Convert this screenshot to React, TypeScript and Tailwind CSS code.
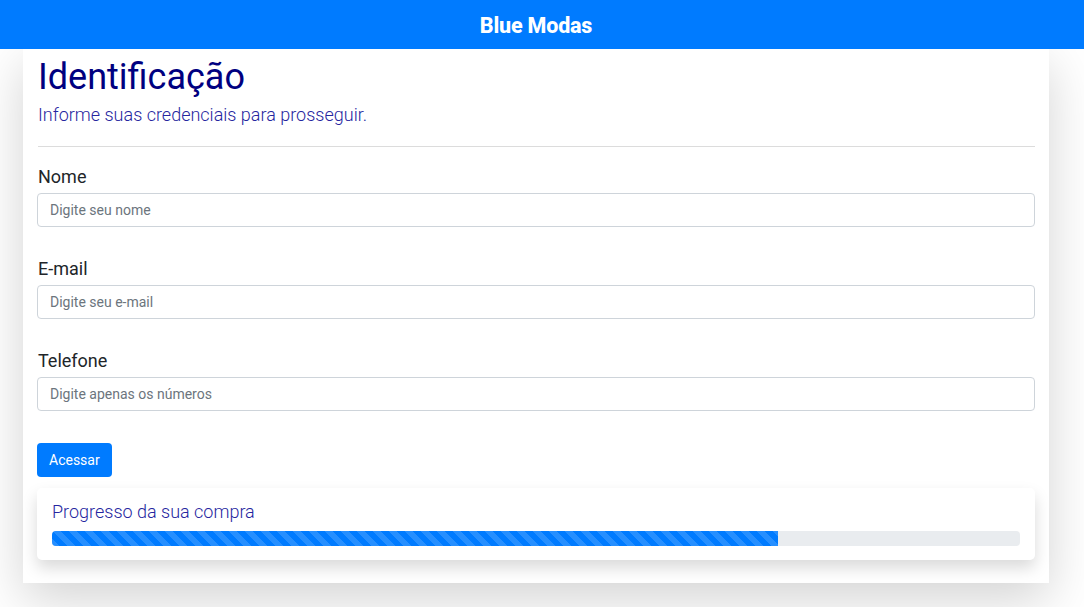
import React from 'react';

const fields = [
  { label: 'Nome', placeholder: 'Digite seu nome' },
  { label: 'E-mail', placeholder: 'Digite seu e-mail' },
  { label: 'Telefone', placeholder: 'Digite apenas os números' },
];

export default function App() {
  const progress = 75;

  return (
    <div className="min-h-[607px] bg-white font-['Roboto','Liberation_Sans',sans-serif]">
      {/* Navbar */}
      <header className="relative z-10 flex h-[49px] items-center justify-center bg-[#007bff] pt-[4px] pr-[12px]">
        <h1 className="text-[21.5px] font-extrabold tracking-[-0.2px] text-white">Blue Modas</h1>
      </header>

      {/* Main card */}
      <main className="ml-[23px] w-[1026px] bg-white px-[14px] pt-[7px] pb-[23px] shadow-[0_1rem_3rem_rgba(0,0,0,0.175)]">
        <h2 className="pl-[1px] text-[36px] leading-[43px] font-normal text-[#000080]">Identificação</h2>
        <p className="mt-[2px] pl-[1px] text-[18px] leading-[27px] font-light text-[#2626a0]">
          Informe suas credenciais para prosseguir.
        </p>
        <hr className="mt-[18px] ml-[1px] mb-[16px] border-t border-[#dcdcdc]" />

        <form className="flex flex-col gap-[28px]" onSubmit={(e) => e.preventDefault()}>
          {fields.map((f) => (
            <div key={f.label} className="flex flex-col">
              <label className="mb-[3px] pl-[1px] text-[18px] leading-[27px] text-[#212529]">{f.label}</label>
              <input
                type="text"
                placeholder={f.placeholder}
                className="h-[34px] w-full rounded-[4px] border border-[#ced4da] px-[12px] text-[14px] text-[#495057] placeholder:text-[#6c757d] outline-none"
              />
            </div>
          ))}
          <div className="pt-[4px]">
            <button
              type="submit"
              className="h-[34px] rounded-[4px] bg-[#007bff] px-[12px] text-[14px] text-white"
            >
              Acessar
            </button>
          </div>
        </form>

        {/* Progress card */}
        <section className="mt-[11px] rounded-[5px] bg-white px-[15px] pt-[10px] pb-[14px] shadow-[0_0.5rem_1rem_rgba(0,0,0,0.15)]">
          <p className="text-[18px] leading-[27px] font-light text-[#2626a0]">Progresso da sua compra</p>
          <div className="mt-[6px] h-[15px] w-full overflow-hidden rounded-[4px] bg-[#e9ecef]">
            <div
              className="h-full bg-[#007bff] bg-[linear-gradient(45deg,rgba(255,255,255,.15)_25%,transparent_25%,transparent_50%,rgba(255,255,255,.15)_50%,rgba(255,255,255,.15)_75%,transparent_75%,transparent)] bg-size-[1rem_1rem]"
              style={{ width: `${progress}%` }}
            />
          </div>
        </section>
      </main>
    </div>
  );
}
